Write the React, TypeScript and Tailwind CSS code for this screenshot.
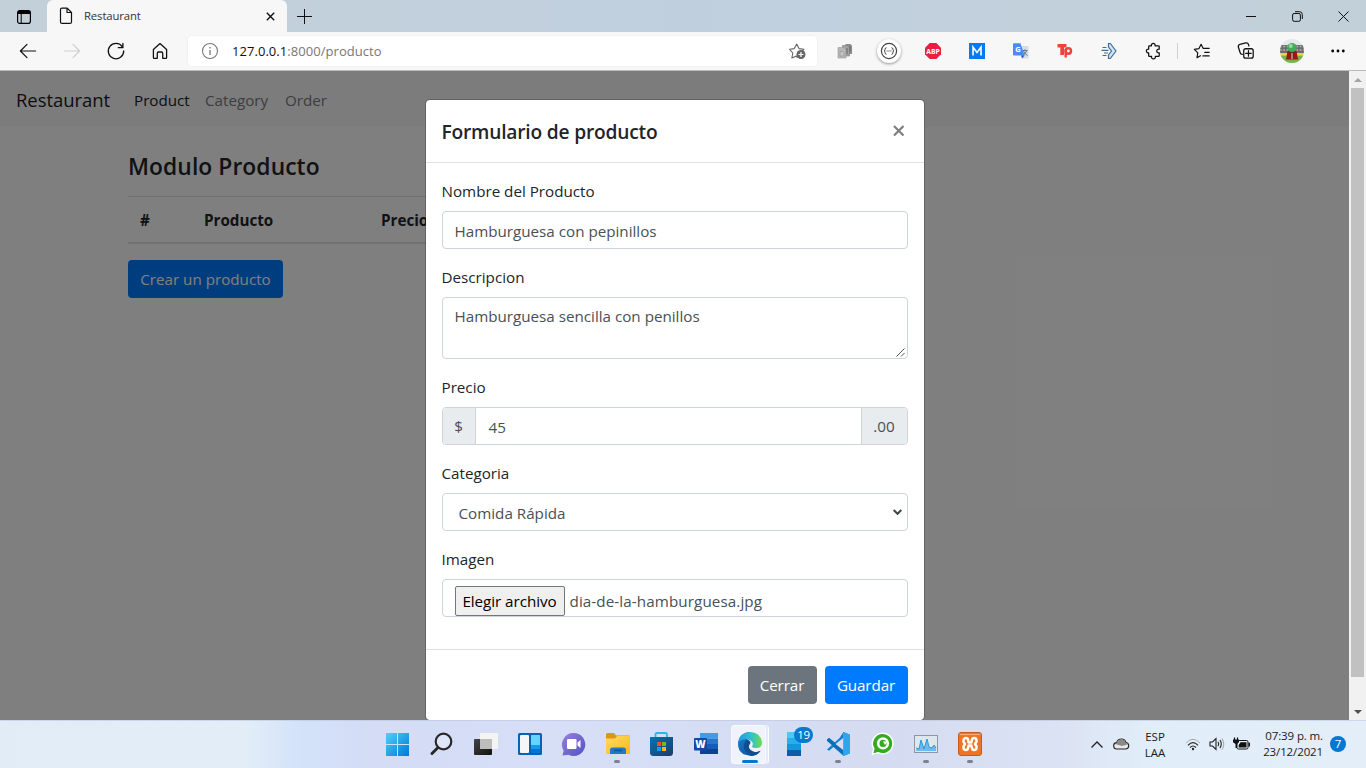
import type { ReactNode } from "react";

const UI = "font-['Open_Sans','Noto_Sans',sans-serif]";

function Cell({ children, w = "w-[44px]" }: { children: ReactNode; w?: string }) {
  return <div className={"flex shrink-0 items-center justify-center " + w}>{children}</div>;
}

function Line({ children, size = 20, color = "#111", sw = 1.2 }: { children: ReactNode; size?: number; color?: string; sw?: number }) {
  return (
    <svg width={size} height={size} viewBox="0 0 20 20" fill="none" stroke={color} strokeWidth={sw} strokeLinecap="round" strokeLinejoin="round" className="block shrink-0">
      {children}
    </svg>
  );
}

function TitleBar() {
  return (
    <div className="flex h-8 shrink-0 bg-gradient-to-r from-[#c3d0d9] via-[#c0cfde] to-[#c2d0d9]">
      <div className="flex w-[47px] items-center justify-center pt-px pl-px">
        <svg width="16" height="16" viewBox="0 0 16 16">
          <rect x="1.6" y="1.6" width="12.8" height="12.8" rx="2.2" fill="none" stroke="#000" strokeWidth="1.2" />
          <path d="M1.5 5V3.5a2 2 0 0 1 2-2h9a2 2 0 0 1 2 2V5z" fill="#000" />
          <path d="M5.2 5v9" stroke="#000" strokeWidth="1" />
        </svg>
      </div>
      <div className="flex w-[240px] items-center rounded-t-[6px] bg-[#f7f7f7] pr-[12px] pl-3">
        <svg width="14" height="18" viewBox="0 0 14 18" fill="none" stroke="#111" strokeWidth="1.2" strokeLinejoin="round">
          <path d="M1.5 2.6q0-1.5 1.5-1.5h5.2l4.3 4.4v9.4q0 1.5-1.5 1.5H3q-1.5 0-1.5-1.5zM8 1.200v4.300h4.400" />
        </svg>
        <span className="ml-[11px] flex-1 text-[11.3px] leading-4 tracking-[-0.1px] text-[#333]">Restaurant</span>
        <svg width="9" height="9" viewBox="0 0 9 9" stroke="#111" strokeWidth="1.400"><path d="M.8.8l7.400 7.400M8.200.8L.8 8.200" /></svg>
      </div>
      <div className="flex w-[34px] items-center justify-center">
        <svg width="15" height="15" viewBox="0 0 15 15" stroke="#111" strokeWidth="1"><path d="M7.500 0v15M0 7.500h15" /></svg>
      </div>
      <div className="flex-1" />
      <div className="flex w-[46px] items-center justify-center">
        <svg width="10" height="10" viewBox="0 0 10 10" stroke="#111"><path d="M0 5.500h10" /></svg>
      </div>
      <div className="flex w-[46px] items-center justify-center">
        <svg width="11" height="11" viewBox="0 0 11 11" fill="none" stroke="#111" strokeWidth="1">
          <rect x=".6" y="2.500" width="7.800" height="7.800" rx="1.500" />
          <path d="M3 .7h4.500A2.800 2.800 0 0 1 10.300 3.500V8" />
        </svg>
      </div>
      <div className="flex w-[46px] items-center justify-center">
        <svg width="11" height="11" viewBox="0 0 11 11" stroke="#111" strokeWidth="1"><path d="M.5.5l10 10M10.500.5l-10 10" /></svg>
      </div>
    </div>
  );
}

function Toolbar() {
  return (
    <div className="flex h-[39px] shrink-0 items-center border-b border-[#b9bcb9] bg-[#f7f7f7] pl-[6px]">
      <Cell><Line><path d="M17.600 10H2.600M9 3.400L2.400 10 9 16.600" /></Line></Cell>
      <Cell><Line color="#cfcfcf"><path d="M2.400 10h15M11 3.400l6.600 6.600-6.600 6.600" /></Line></Cell>
      <Cell><Line sw={1.3}><path d="M16.400 5.800A7.700 7.700 0 1 0 17.700 10M16.900 2.400v4.300h-4.600" /></Line></Cell>
      <Cell><Line sw={1.3}><path d="M3.400 8.600L10 2.600l6.600 6v7.800q0 .9-.9.900h-3v-5a1.300 1.300 0 0 0-1.300-1.300H8.600a1.300 1.300 0 0 0-1.300 1.300v5h-3q-.9 0-.9-.9z" /></Line></Cell>
      <div className="ml-[6px] flex h-[30px] w-[629px] shrink-0 items-center rounded bg-white pr-[9px] pl-[13px] shadow-[0_0_2px_rgba(0,0,0,0.08)]">
        <svg width="18" height="18" viewBox="0 0 18 18" fill="none" stroke="#777">
          <circle cx="9" cy="9" r="7.500" strokeWidth="1.100" />
          <path d="M9 8v5M9 5v1.400" strokeWidth="1.300" />
        </svg>
        <span className="ml-[13px] flex-1 text-[13px] leading-5 tracking-[0.050px] text-[#777]"><span className="text-[#111]">127.0.0.1</span>:8000/producto</span>
        <svg width="20" height="18" viewBox="0 0 20 18" fill="none" stroke="#666" strokeWidth="1.100" strokeLinejoin="round">
          <path d="M9.500 16l-1.200-2-4.400 2 .9-5L1.600 7.300l4.700-.7L8.700 2l2.300 4.600 4.900.7-2 2" />
          <circle cx="13" cy="12.500" r="4.500" fill="#666" stroke="none" />
          <path d="M13 10v5M10.500 12.500h5" stroke="#fff" strokeWidth="1.200" />
        </svg>
      </div>
      <div className="w-[6px] shrink-0" />
      <Cell>
        <svg width="16" height="16" viewBox="0 0 16 16">
          <path d="M8.500 1H13.500l1.500 1.500V11H8.500z" fill="#8c8c8c" />
          <path d="M5.500 2.500h5L12.500 4.500v8.500h-7z" fill="#a3a3a3" stroke="#7d7d7d" strokeWidth=".6" />
          <path d="M1 4.500h6l2 2V15H1z" fill="#b8b8b8" stroke="#999" strokeWidth=".6" />
          <path d="M3 8.500h2.500l1.500 1.500v3H3z" fill="#c6c6c6" stroke="#959595" strokeWidth=".7" /><path d="M10 5v6M13 3.500v5" stroke="#666" fill="none" />
        </svg>
      </Cell>
      <Cell>
        <div className="flex size-6 items-center justify-center rounded-full bg-white shadow-[0_1px_3px_rgba(0,0,0,0.4)]">
          <svg width="18" height="18" viewBox="0 0 18 18" fill="none" stroke="#444" strokeWidth="1.200">
            <circle cx="9" cy="9" r="7.600" />
            <path d="M6.500 5.700q-1.400 0-1.400 1.500T4 9q1.100 0 1.100 1.700t1.400 1.600M11.500 5.700q1.400 0 1.400 1.500T14 9q-1.100 0-1.100 1.700t-1.400 1.600" strokeWidth="1" />
            <path d="M6.500 9h5" strokeDasharray="1.100 .8" />
          </svg>
        </div>
      </Cell>
      <Cell>
        <svg width="16" height="16" viewBox="0 0 16 16" className="overflow-visible">
          <path d="M4.700 0h6.600L16 4.700v6.600L11.300 16H4.700L0 11.300V4.700z" fill="#ed1c40" />
          <text x="8" y="10.800" textAnchor="middle" textLength="13.500" lengthAdjust="spacingAndGlyphs" fontSize="7.800" fontWeight="700" fill="#fff">ABP</text>
        </svg>
      </Cell>
      <Cell>
        <svg width="16" height="16" viewBox="0 0 16 16">
          <rect width="16" height="16" fill="#007cf0" />
          <path d="M4 12.500V4.200L8 9.500l4-5.300v8.300" fill="none" stroke="#fff" strokeWidth="1.600" />
        </svg>
      </Cell>
      <Cell>
        <svg width="16" height="16" viewBox="0 0 16 16">
          <path d="M6 3h9.500v12.500H9z" fill="#d9dcdf" />
          <path d="M9.500 7.500h5M12 6.300v1.500M13.500 8q-1 3-4 4.500M10.500 8q1.500 3.500 4 4.500" stroke="#5a7f9c" fill="none" />
          <path d="M1 .2h6.500L11.600 12.500H1q-1 0-1-1V1.200q0-1 1-1z" fill="#4c8bf5" /><path d="M8 12.500h3.600l-2.400 3z" fill="#2a56c6" />
          <text x="4.900" y="9.200" textAnchor="middle" fontSize="7.500" fontWeight="700" fill="#fff">G</text>
        </svg>
      </Cell>
      <Cell>
        <svg width="18" height="18" viewBox="0 0 18 18">
          <path d="M1.500 2h9v3.600H8V13H4.300V5.600H1.500z" fill="#f0423c" />
          <circle cx="12.300" cy="9" r="2.700" fill="none" stroke="#f0423c" strokeWidth="2.500" />
          <path d="M8.500 7h2.400v8.500H8.500z" fill="#f0423c" />
        </svg>
      </Cell>
      <Cell>
        <svg width="17" height="18" viewBox="0 0 17 18" fill="none" stroke="#3c6e9f" strokeWidth="1.200">
          <path d="M7.500 1.500h1.800L15 9l-5.700 7.500H7.500V13l3-4-3-4z" fill="#cfe5f5" />
          <path d="M1.500 5.500h4M.5 8.300h7M3 11h4M1.500 13.500h4" strokeWidth="1.200" />
        </svg>
      </Cell>
      <Cell>
        <Line size={18} sw={1.400}><path d="M6 4.200h2.300a2.100 2.100 0 1 1 4 0h3.800q.8 0 .8.800v3a2.100 2.100 0 1 0 0 4v3.200q0 .8-.8.800h-3.500a2.200 2.200 0 1 1-4.200 0H6q-.8 0-.8-.8v-3.100a2.100 2.100 0 1 1 0-4.100V5q0-.8.8-.8z" /></Line>
      </Cell>
      <div className="ml-[2px] h-4 w-px shrink-0 bg-[#cfcfcf]" />
      <Cell w="w-[48px]">
        <Line size={18} sw={1.300}><path d="M8.300 15.200L4.400 17.500l.9-5.500L1.500 8.200l5-.8L9 2.500l2.200 4.500M11.200 7H18M13 11.500h5M11 15.500h7" /></Line>
      </Cell>
      <Cell w="w-[40px]">
        <Line size={18} sw={1.400}><path d="M6 13.700a2.500 2.500 0 0 1-2.500-1.800L1.500 5.600A2.500 2.500 0 0 1 3.200 2.700l6.500-1.700a2.500 2.500 0 0 1 3 1.700l.5 1.700" /><rect x="7.500" y="7.500" width="10.500" height="10.500" rx="2.200" /><path d="M12.750 9.700v6M9.700 12.750h6" /></Line>
      </Cell>
      <Cell w="w-[52px]">
        <svg width="24" height="24" viewBox="0 0 24 24" className="rounded-full">
          <rect width="24" height="24" fill="#e5e7e8" /><rect y="6" width="24" height="8" fill="#6d6d6d" />
          <path d="M0 7.500h24M0 11h24" stroke="#b5b5b5" strokeWidth="1.500" strokeDasharray="1.700 1.600" />
          <rect y="14" width="24" height="2.500" fill="#ead638" /><rect y="16.500" width="24" height="7.500" fill="#75b548" />
          <path d="M7.500 12h9l1.500 8.500H6z" fill="#9d1712" /><path d="M10 13l2 7 2-7z" fill="#49312f" /><path d="M12 14v6" stroke="#ddd" />
          <circle cx="12" cy="8.500" r="4.600" fill="#3fae58" /><circle cx="10.800" cy="7" r="2" fill="#97dba0" />
        </svg>
      </Cell>
      <Cell w="w-[40px]"><svg width="14" height="4" viewBox="0 0 14 4"><circle cx="1.700" cy="2" r="1.400" /><circle cx="7" cy="2" r="1.400" /><circle cx="12.300" cy="2" r="1.400" /></svg></Cell>
    </div>
  );
}

const field = "rounded border border-[#ced4da] bg-white text-[#495057]";
const label = "mb-2 h-6 text-[#212529]";

function Modal() {
  return (
    <div className="mx-auto mt-[28px] w-[500px] rounded-[5px] border border-black/20 bg-white bg-clip-padding text-[15.2px] leading-6">
      <div className="flex h-[63px] items-center justify-between border-b border-[#dee2e6] px-4">
        <h5 className="pt-px text-[19.2px] leading-[30px] font-semibold tracking-[-0.2px] text-[#212529]">Formulario de producto</h5>
        <svg width="18" height="18" viewBox="0 0 18 18" stroke="#7f7f7f" strokeWidth="2.200"><path d="M4 4l9.500 9.500M13.500 4L4 13.500" /></svg>
      </div>
      <div className="flex flex-col px-4 pt-4 pb-8">
        <div className={label}>Nombre del Producto</div>
        <div className={field + " mb-4 h-[38px] px-3 py-[7px]"}>Hamburguesa con pepinillos</div>
        <div className={label}>Descripcion</div>
        <div className={field + " mb-4 flex h-[62px] justify-between pt-[6px] pl-3"}>
          <span>Hamburguesa sencilla con penillos</span>
          <svg width="10" height="10" viewBox="0 0 10 10" stroke="#555" strokeWidth="1" className="mr-px self-end"><path d="M.5 8.500l8-8M5 8.500L8.500 5" /></svg>
        </div>
        <div className={label}>Precio</div>
        <div className={field + " mb-4 flex h-[38px] overflow-hidden"}>
          <div className="flex w-[33px] items-center justify-center border-r border-[#ced4da] bg-[#e9ecef]">$</div>
          <div className="flex flex-1 items-center px-[13px] pt-px">45</div>
          <div className="flex w-[46px] items-center justify-center border-l border-[#ced4da] bg-[#e9ecef]">.00</div>
        </div>
        <div className={label}>Categoria</div>
        <div className={field + " mb-4 flex h-[38px] items-center justify-between pt-px pr-[5px] pl-4"}>
          <span className="pt-px">Comida Rápida</span>
          <svg width="9" height="7" viewBox="0 0 9 7" fill="none" stroke="#3f464c" strokeWidth="2"><path d="M.7 1l3.800 3.800L8.300 1" /></svg>
        </div>
        <div className={label}>Imagen</div>
        <div className={field + " flex h-[38px] items-start pt-[6px] pl-3"}>
          <div className="flex h-[30px] w-[110px] items-center justify-center rounded-[2px] border border-[#767676] bg-[#efefef] tracking-[-0.050px] whitespace-nowrap text-black">Elegir archivo</div>
          <span className="ml-[5px] pt-[3px] tracking-[0.100px]">dia-de-la-hamburguesa.jpg</span>
        </div>
      </div>
      <div className="flex justify-end gap-2 border-t border-[#dee2e6] p-4 text-white">
        <div className="flex h-[38px] w-[69px] items-center justify-center rounded bg-[#6c757d] tracking-[-0.1px]">Cerrar</div>
        <div className="flex h-[38px] w-[83px] items-center justify-center rounded bg-[#007bff] tracking-[-0.1px]">Guardar</div>
      </div>
    </div>
  );
}

function Page() {
  return (
    <div className="relative h-[649px] w-[1349px] overflow-hidden bg-white text-[15.2px] leading-6 text-[#212529]">
      <nav className="flex h-[56px] items-center bg-[#f8f9fa] px-4 pt-px">
        <span className="w-[118px] text-[18.500px] tracking-[-0.060px] text-[#1a1a1a]">Restaurant</span>
        <span className="w-[71px] text-[#1a1a1a]">Product</span>
        <span className="w-[80px] text-[#7c7c7d]">Category</span>
        <span className="text-[#7c7c7d]">Order</span>
      </nav>
      <div className="flex w-[850px] flex-col pt-[25px] pl-32">
        <h4 className="mb-[15px] text-[22.800px] leading-[29px] font-semibold tracking-[0.080px]">Modulo Producto</h4>
        <div className="flex h-[48px] items-center border-t border-b-2 border-[#dee2e6] pt-px pl-3 font-bold">
          <span className="w-16">#</span><span className="w-[177px]">Producto</span><span>Precio</span>
        </div>
        <div className="mt-4 flex h-[38px] w-[155px] items-center justify-center rounded bg-[#007bff] text-white">Crear un producto</div>
      </div>
      <div className="absolute inset-0 bg-black/50"><Modal /></div>
    </div>
  );
}

function Scrollbar() {
  return (
    <div className="flex w-[17px] flex-col items-center bg-[#f1f1f1]">
      <div className="flex h-[17px] items-center justify-center"><svg width="8" height="4" viewBox="0 0 8 4"><path d="M0 4l4-4 4 4z" fill="#a3a3a3" /></svg></div>
      <div className="h-[589px] w-[13px] bg-[#c1c1c1]" />
      <div className="flex-1" />
      <div className="flex h-[17px] items-center justify-center"><svg width="8" height="4" viewBox="0 0 8 4"><path d="M0 0h8L4 4z" fill="#505050" /></svg></div>
    </div>
  );
}

function TaskIcon({ children, run = false }: { children: ReactNode; run?: boolean }) {
  return (
    <div className="flex w-[44px] shrink-0 flex-col items-center pt-[11px]">
      <svg width="26" height="26" viewBox="0 0 26 26" className="block overflow-visible">{children}</svg>
      {run && <div className="mt-[3px] h-[3px] w-[6px] rounded-full bg-[#7d828d]" />}
    </div>
  );
}

function Taskbar() {
  return (
    <div className="flex h-12 shrink-0 bg-[linear-gradient(90deg,#e1ecf6_0%,#e2edf7_18%,#d3e2fa_22%,#d4dcf6_27%,#d6dff6_40%,#d5dcf2_65%,#dbe2f3_77%,#e1edf9_84%,#e3eef8_100%)] pl-[375px] shadow-[inset_0_1px_0_rgba(170,185,210,0.4)]">
      <svg width="0" height="0" className="absolute">
        <defs>
          <linearGradient id="win" x1="0" y1="0" x2="1" y2="1"><stop stopColor="#4fd0fb" /><stop offset="1" stopColor="#0078d4" /></linearGradient>
          <linearGradient id="chat" x1="0" y1="0" x2="1" y2="1"><stop stopColor="#9b80d8" /><stop offset="1" stopColor="#4f52c5" /></linearGradient>
          <linearGradient id="fold" x1="0" y1="0" x2="1" y2="1"><stop stopColor="#ffdb68" /><stop offset="1" stopColor="#fbb813" /></linearGradient>
          <linearGradient id="store" x1="0" y1="0" x2="1" y2="1"><stop stopColor="#0a6fbd" /><stop offset="1" stopColor="#203a66" /></linearGradient>
          <linearGradient id="edgeTop" x1="0" y1="0" x2="1" y2="0"><stop stopColor="#1b9de2" /><stop offset=".55" stopColor="#31bfce" /><stop offset="1" stopColor="#6be04b" /></linearGradient>
          <linearGradient id="edgeBot" x1="0" y1="0" x2="1" y2="1"><stop stopColor="#1681d6" /><stop offset="1" stopColor="#0b4a95" /></linearGradient>
          <linearGradient id="blk" x1="0" y1="0" x2="1" y2="1"><stop stopColor="#444" /><stop offset="1" stopColor="#111" /></linearGradient>
        </defs>
      </svg>
      <TaskIcon><path d="M2 2h11v11H2zM14 2h11v11H14zM2 14h11v11H2zM14 14h11v11H14z" fill="url(#win)" /></TaskIcon>
      <TaskIcon><circle cx="15.500" cy="10.500" r="7.800" fill="#e8edf9" fillOpacity=".5" stroke="#292929" strokeWidth="2.200" /><path d="M9.500 17l-5.500 5.500" stroke="#292929" strokeWidth="3" strokeLinecap="round" /></TaskIcon>
      <TaskIcon><rect x="2" y="8" width="18" height="16" rx="1" fill="url(#blk)" /><rect x="8" y="2" width="18" height="16" rx="1" fill="#f4f4f4" /><path d="M8 8h12v10H8z" fill="#bdbdbd" /></TaskIcon>
      <TaskIcon><rect x="2" y="2" width="24" height="22" rx="1.500" fill="#0963b3" /><rect x="4" y="4" width="9" height="18" rx="1" fill="#f6f6f6" /><rect x="15" y="4" width="9" height="10" rx=".5" fill="#66d4fd" /><path d="M15 14h9v4h-9z" fill="#0e9bf0" /><path d="M15 18h9v4h-9z" fill="#0573d4" /></TaskIcon>
      <TaskIcon><path d="M13.500 2A11.500 11.500 0 1 1 8.500 23.700L2.500 24.500l1.200-5A11.500 11.500 0 0 1 13.500 2z" fill="url(#chat)" /><rect x="7" y="8" width="9.500" height="10" rx="1.300" fill="#fff" /><path d="M17.500 11.500l3-2.500v8l-3-2.500z" fill="#fff" /></TaskIcon>
      <TaskIcon run><path d="M2 3.500Q2 2 3.500 2H10l2 2.500H25q1 0 1 1V9H2z" fill="#dc9811" /><path d="M2 7.500h9L13 5h13v18H2z" fill="url(#fold)" /><path d="M6 23v-4q0-2.500 2.500-2.500h11q2.500 0 2.500 2.500v4z" fill="#1a7cc3" /><path d="M10 19.500h8" stroke="#0a5796" strokeWidth="1.500" /></TaskIcon>
      <TaskIcon><path d="M7.500 7.500V3.500Q7.500 2 9 2h8.500q1.500 0 1.500 1.500v4" fill="none" stroke="#25b8ef" strokeWidth="1.800" /><path d="M2 6h23v15.500q0 3.500-3.500 3.500h-16Q2 25 2 21.500z" fill="url(#store)" /><path d="M9 11h4v4H9z" fill="#f25022" /><path d="M14 11h4v4h-4z" fill="#7fba00" /><path d="M9 16h4v4H9z" fill="#00a4ef" /><path d="M14 16h4v4h-4z" fill="#ffb900" /></TaskIcon>
      <TaskIcon>
        <path d="M8 2h18v5.500H8z" fill="#3c9de8" /><path d="M8 7.500h18V13H8z" fill="#2277d0" /><path d="M8 13h18v5H8z" fill="#185abd" /><path d="M8 18h18v5H8z" fill="#103f91" />
        <rect x="2" y="7" width="13" height="12.500" rx="1" fill="#144a9e" />
        <text x="8.500" y="16.800" textAnchor="middle" fontSize="10" fontWeight="800" fill="#fff">W</text>
      </TaskIcon>
      <div className="mt-[5px] mr-[3px] ml-[4px] h-[39px] w-[38px] shrink-0 rounded border-r border-white/90 bg-white/40">
        <div className="flex h-[39px] w-[35px] flex-col items-center rounded border border-white/60 bg-white/40 pt-[5px] pl-[3px]">
          <svg width="26" height="26" viewBox="0 0 26 26" className="block shrink-0">
            <path d="M13 1A12 12 0 0 0 1 13q0 7 5.500 10.200L14 25q6 0 9.600-5.200-6 3.200-10.200-.7Q11 16.500 12 13l-2-3z" fill="url(#edgeBot)" />
            <path d="M1 12Q2.500 1 13 1q10 0 12 10 .5 6-5.800 6-3.500 0-4.500-1.500 2.200-2 .3-4.700Q13 8.300 9 8.300 3.500 8.300 1 12z" fill="url(#edgeTop)" />
            <path d="M9.500 8.400Q4.500 15 8.700 20.700q4.800 5.600 11.300 2.500 2.200-1.200 3.600-3.400-6 3.200-10.200-.7-3-3.200-.2-6.600 1.300-2.700-3.700-4.100z" fill="#114d91" />
          </svg>
          <div className="mt-[3px] h-[3px] w-4 shrink-0 rounded-full bg-[#0078d4]" />
        </div>
      </div>
      <TaskIcon>
        <path d="M6 1h14v24H6z" fill="#1496df" /><path d="M6 1h14v6H6z" fill="#4bc8f4" /><path d="M6 7h14v6H6z" fill="#27afe9" /><path d="M6 19h14v6H6z" fill="#0b5da7" />
        <rect x="13" y="-4" width="19" height="16" rx="8" fill="#0878d1" />
        <text x="22.500" y="8.300" textAnchor="middle" fontSize="11.500" letterSpacing="-.3" fill="#fff">19</text>
      </TaskIcon>
      <TaskIcon run><path d="M18.500 1l6 2.500v19l-6 2.500L8.500 16 4 19.700l-2-1.200L14.500 7z" fill="#0f84cc" /><path d="M2 8.500l2-1.700 14.500 11.700V24L2 10z" fill="#0b6fb8" /><path d="M18 1l7 2.500v19L18 25z" fill="#2ea6ed" /><path d="M10.500 13l7.700-6v12z" fill="#d6dff3" /></TaskIcon>
      <TaskIcon><path d="M13.500 2.200a10.300 10.300 0 1 1-4.500 19.500l-5.500 1.500 1.300-5.500a10.300 10.300 0 0 1 8.700-15.500z" fill="#35ab22" stroke="#fff" strokeWidth="1.500" /><circle cx="14" cy="12.400" r="4.800" fill="none" stroke="#fff" strokeWidth="2.500" /><path d="M14 10.200l4.500.2-2.500 3.700z" fill="#fff" /></TaskIcon>
      <TaskIcon run><rect x="1.500" y="4.500" width="23" height="17" fill="#dce8ee" stroke="#8f989f" /><path d="M3 19l1-2 2 1 2-9 3 9 3-10 2 8 3 1 2-3 2 3v3H3z" fill="#6fbbed" /><path d="M3 17l3 1 2-9 3 9 3-10 2 8 3 1 2-3 2 3" fill="none" stroke="#269ae0" /></TaskIcon>
      <TaskIcon run><rect x="1.500" y="1.500" width="23" height="23" rx="2.500" fill="#ee7423" stroke="#c95b16" /><path d="M2.500 3.500h21" stroke="#f6a878" strokeWidth="1.200" /><path d="M9 7a2.500 2.500 0 0 0-2.500 2.500v1.300L8 13l-1.500 2.200v1.300A2.500 2.500 0 0 0 9 19q1.800 0 2-1.800l.6-2.700h2.800l.6 2.700q.2 1.800 2 1.800a2.500 2.500 0 0 0 2.500-2.500v-1.300L18 13l1.500-2.200V9.500A2.500 2.500 0 0 0 17 7q-1.800 0-2 1.800l-.6 2.700h-2.800L11 8.800Q10.800 7 9 7z" fill="none" stroke="#fff" strokeWidth="2.500" strokeLinejoin="round" /></TaskIcon>
      <div className="flex-1" />
      <div className="flex shrink-0 items-center pr-5 text-[11px] leading-4 text-[#1a1a1a]">
        <svg width="12" height="7" viewBox="0 0 12 7" fill="none" stroke="#222" strokeWidth="1.300"><path d="M.5 6.500L6 1l5.500 5.500" /></svg>
        <svg width="17" height="12" viewBox="0 0 17 12" className="ml-[10px]"><path d="M4 11a3.200 3.200 0 0 1-.3-6.400A4.800 4.800 0 0 1 13 4.500a3.300 3.300 0 0 1 0 6.500z" fill="#e8e8e8" stroke="#222" strokeWidth="1.100" /><path d="M3.700 4.900Q5 1.200 8.500 1.200T12.700 5q2 .3 2.500 1.300L9 8 2.200 6q.5-.9 1.500-1.100z" fill="#8a8a8a" /></svg>
        <div className="ml-[10px] flex w-[30px] flex-col items-center pt-px text-[11.500px]"><span>ESP</span><span>LAA</span></div>
        <svg width="16" height="13" viewBox="0 0 16 13" fill="none" className="ml-[15px]"><path d="M1 5q7-7.500 14 0" stroke="#aaa" /><path d="M3 7.300q5-5.300 10 0M5 9.500q3-3 6 0" stroke="#222" strokeWidth="1.100" /><circle cx="8" cy="11" r="1.200" fill="#222" /></svg>
        <svg width="16" height="14" viewBox="0 0 16 14" fill="none" className="ml-[8px]" stroke="#222" strokeWidth="1.100"><path d="M1 5h2.500L7 1.500v11L3.500 9H1zM9 4.700q1.400 2.300 0 4.600M11 3q2.500 4 0 8" /><path d="M13 1.500q3.500 5.500 0 11" stroke="#aaa" /></svg>
        <svg width="17" height="14" viewBox="0 0 17 14" className="ml-[8px]"><rect x="4" y="3.500" width="11" height="8.500" rx="1.500" fill="#e3eef8" stroke="#111" /><path d="M7.500 5.200h6v5.200H5.700V8zM15.500 5.800H17v3.800h-1.500zM0 2.500h6v2.800L4 7v4H2.500V7L0 5.300z" fill="#111" /><path d="M1.500.5v3M4.500.5v3" stroke="#111" strokeWidth="1.200" /></svg>
        <div className="ml-[13px] flex w-[60px] flex-col items-end text-[11.500px] tracking-[-0.120px] whitespace-nowrap"><span>07:39 p. m.</span><span>23/12/2021</span></div>
        <div className="ml-[7px] flex size-4 items-center justify-center rounded-full bg-[#0078d4] text-[11.500px] text-white">7</div>
      </div>
    </div>
  );
}

export default function App() {
  return (
    <div className={"flex h-[768px] w-[1366px] flex-col overflow-hidden " + UI}>
      <TitleBar />
      <Toolbar />
      <div className="flex h-[649px] shrink-0"><Page /><Scrollbar /></div>
      <Taskbar />
    </div>
  );
}
